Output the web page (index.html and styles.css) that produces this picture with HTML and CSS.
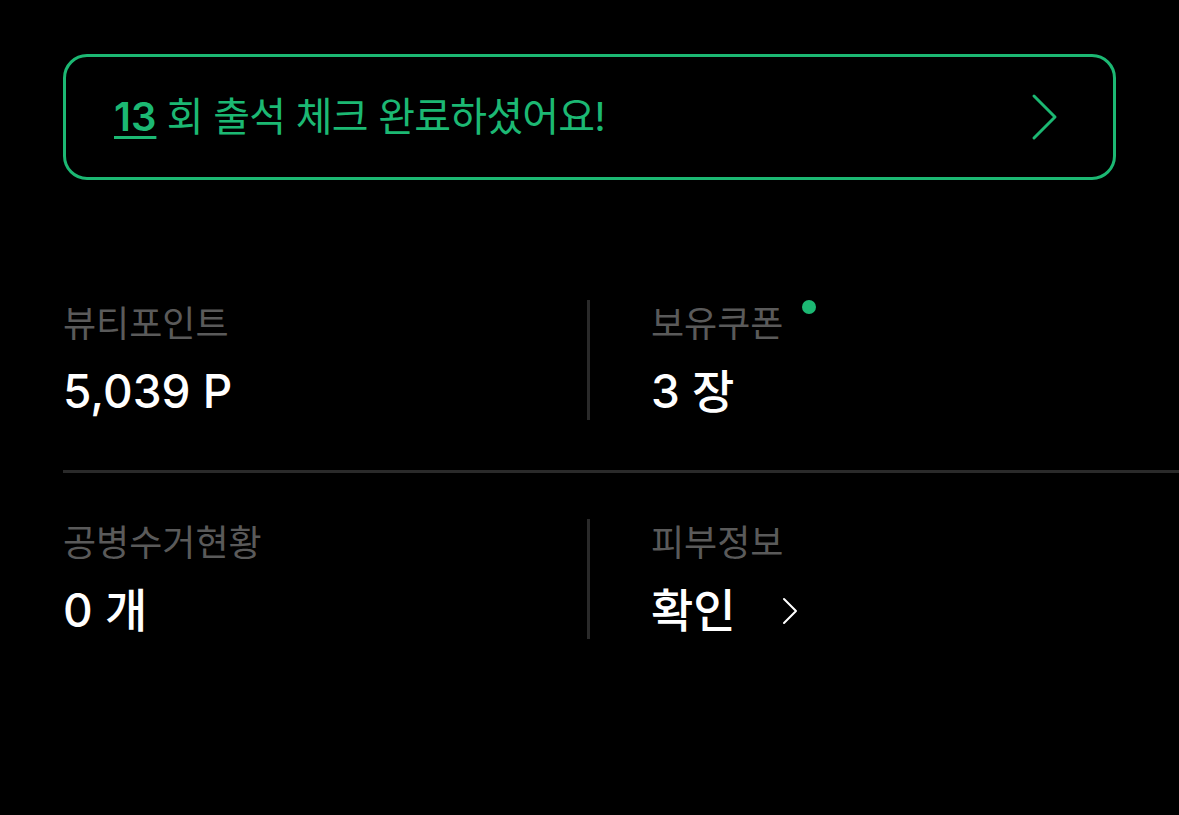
FILE: index.html
```html
<!DOCTYPE html>
<html lang="ko">
<head>
<meta charset="utf-8">
<link rel="stylesheet" href="styles.css">
</head>
<body>
<main class="page">
  <a class="attend">
    <span class="attend-text"><span class="attend-count">13</span> 회 출석 체크 완료하셨어요!</span>
    <svg class="attend-arrow" width="28" height="48" viewBox="0 0 28 48"><path d="M3 3 L24 24 L3 45" fill="none" stroke="#1cb873" stroke-width="3" stroke-linecap="round" stroke-linejoin="round"/></svg>
  </a>
  <section class="stats">
    <div class="row">
      <div class="cell">
        <div class="label">뷰티포인트</div>
        <div class="value">5,039 P</div>
      </div>
      <div class="cell cell-right">
        <div class="label">보유쿠폰<span class="dot"></span></div>
        <div class="value">3 장</div>
      </div>
    </div>
    <div class="divider"></div>
    <div class="row">
      <div class="cell">
        <div class="label">공병수거현황</div>
        <div class="value">0 개</div>
      </div>
      <div class="cell cell-right">
        <div class="label">피부정보</div>
        <div class="value">확인<svg class="value-arrow" width="16" height="28" viewBox="0 0 16 28"><path d="M2 2 L14 14 L2 26" fill="none" stroke="#ffffff" stroke-width="2" stroke-linecap="round" stroke-linejoin="round"/></svg></div>
      </div>
    </div>
  </section>
</main>
</body>
</html>
```
FILE: styles.css
```css
html, body {
  margin: 0;
  padding: 0;
  background: #000;
}
body {
  font-family: "Inter", "Noto Sans CJK KR", sans-serif;
  width: 1179px;
  height: 815px;
  overflow: hidden;
}
.page {
  padding: 54px 0 0 63px;
}
.attend {
  box-sizing: border-box;
  width: 1053px;
  height: 126px;
  border: 3px solid #1cb873;
  border-radius: 24px;
  display: flex;
  align-items: center;
  justify-content: space-between;
  padding: 0 54px 0 48px;
  color: #1cb873;
}
.attend-text {
  font-family: "Inter", "Noto Sans CJK KR", sans-serif;
  font-size: 40px;
  letter-spacing: -0.8px;
  font-weight: 400;
  margin-top: -6px;
}
.attend-count {
  font-weight: 600;
  letter-spacing: 0;
  text-decoration: underline;
  text-decoration-thickness: 3px;
  text-underline-offset: 5px;
}
.attend-arrow {
  display: block;
}
.stats {
  margin-top: 120px;
}
.row {
  display: grid;
  grid-template-columns: 524px 1fr;
  height: 120px;
}
.cell {
  display: flex;
  flex-direction: column;
  justify-content: flex-start;
}
.cell-right {
  border-left: 3px solid #2a2a2a;
  padding-left: 61px;
}
.label {
  font-size: 36px;
  color: #5a5a5a;
  line-height: 44px;
  margin-top: 2px;
  letter-spacing: 0;
  position: relative;
  align-self: flex-start;
}
.dot {
  position: absolute;
  top: -2px;
  right: -33px;
  width: 14px;
  height: 14px;
  border-radius: 50%;
  background: #1cb873;
}
.value {
  font-size: 46px;
  font-weight: 500;
  color: #fff;
  line-height: 52px;
  margin-top: 19px;
  letter-spacing: 0;
  display: flex;
  align-items: center;
}
.value-arrow {
  margin-left: 46px;
  margin-top: 2px;
}
.divider {
  height: 3px;
  background: #2a2a2a;
  margin: 50px 0 46px 0;
}
```
